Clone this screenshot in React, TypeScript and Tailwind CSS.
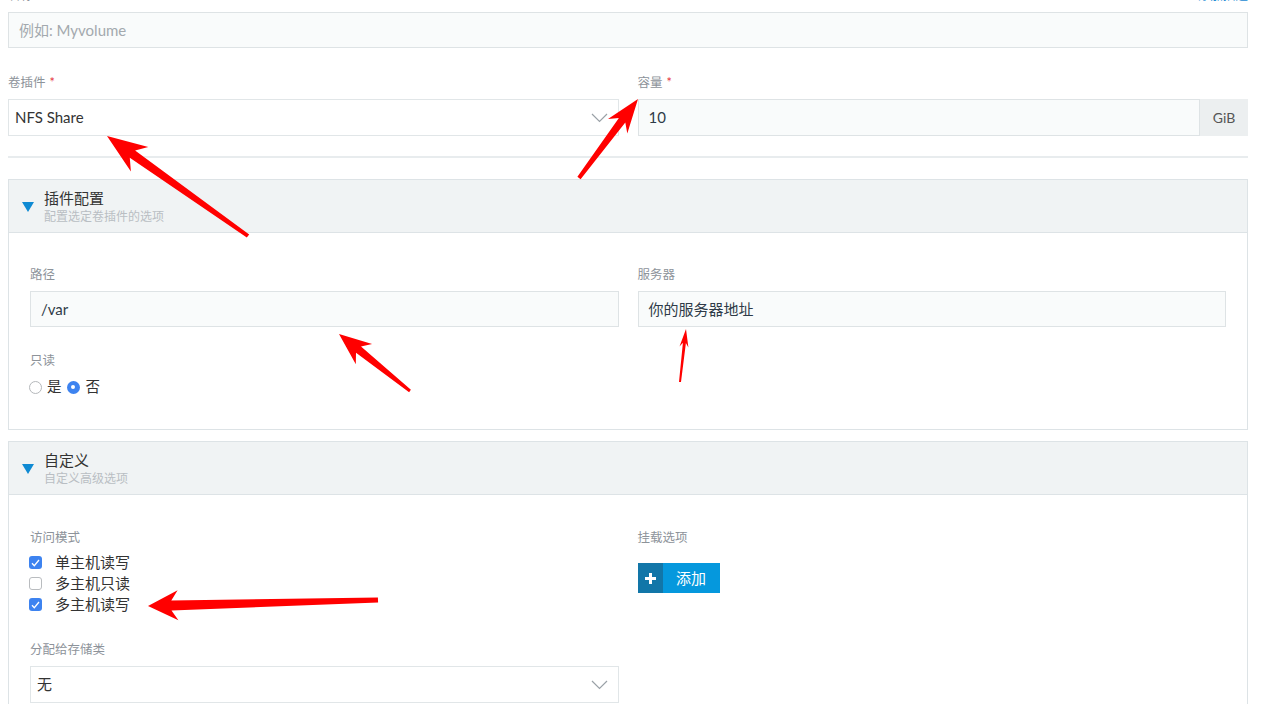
import React from 'react';

type Pt = [number, number];

// red annotation arrows: tapered shaft + swept-back head
const arrowPoints = (tail: Pt, tip: Pt, w0: number, w1: number, headLen: number, headW: number) => {
  const dx = tip[0] - tail[0];
  const dy = tip[1] - tail[1];
  const len = Math.hypot(dx, dy);
  const ux = dx / len;
  const uy = dy / len;
  const nx = -uy;
  const ny = ux;
  const bx = tip[0] - ux * headLen;
  const by = tip[1] - uy * headLen;
  const jx = bx + ux * headLen * 0.22;
  const jy = by + uy * headLen * 0.22;
  const p = (x: number, y: number, k: number) => `${(x + nx * k).toFixed(1)},${(y + ny * k).toFixed(1)}`;
  return [
    p(tail[0], tail[1], w0 / 2),
    p(jx, jy, w1 / 2),
    p(bx, by, headW / 2),
    `${tip[0]},${tip[1]}`,
    p(bx, by, -headW / 2),
    p(jx, jy, -w1 / 2),
    p(tail[0], tail[1], -w0 / 2),
  ].join(' ');
};

const arrows: { tail: Pt; tip: Pt; w0: number; w1: number; hl: number; hw: number }[] = [
  { tail: [248, 236], tip: [107, 136], w0: 4, w1: 9, hl: 40, hw: 30 },
  { tail: [579, 178], tip: [638, 99], w0: 4, w1: 8, hl: 34, hw: 24 },
  { tail: [410, 391], tip: [339, 334], w0: 3, w1: 8, hl: 32, hw: 26 },
  { tail: [680, 382], tip: [686, 329], w0: 2, w1: 3, hl: 18, hw: 9 },
  { tail: [378, 600], tip: [148, 606], w0: 5, w1: 10, hl: 30, hw: 30 },
];

const Label: React.FC<{ text: string; required?: boolean }> = ({ text, required }) => (
  <div className="h-[18px] leading-[18px] text-[12.5px] text-[#8d939a]">
    {text}
    {required && <span className="ml-1 text-[#e5333b]">*</span>}
  </div>
);

const TextBox: React.FC<{ value?: string; placeholder?: string }> = ({ value, placeholder }) => (
  <div className="mt-[7px] flex h-9 items-center border border-[#dee3e5] bg-[#f9fbfb] px-[10px] text-[15px] text-[#2f3b48]">
    {value ? value : <span className="text-[#a3a9ae]">{placeholder}</span>}
  </div>
);

const Chevron = () => (
  <svg width="17" height="10" viewBox="0 0 17 10" fill="none">
    <path d="M1 1l7.5 7.5L16 1" stroke="#9aa1a7" strokeWidth="1.2" />
  </svg>
);

const SelectBox: React.FC<{ value: string; className?: string }> = ({ value, className }) => (
  <div className={`flex h-[37px] items-center justify-between border border-[#e1e6e8] bg-white pl-[6px] pr-[10px] text-[15px] text-[#333] ${className || ''}`}>
    <span>{value}</span>
    <Chevron />
  </div>
);

const Section: React.FC<{ title: string; sub: string; children: React.ReactNode; className?: string }> = ({ title, sub, children, className }) => (
  <div className={`border border-[#dde3e6] ${className || ''}`}>
    <div className="flex h-[53px] items-center border-b border-[#dde3e6] bg-[#f0f3f4] pl-[13px]">
      <svg width="12" height="10" viewBox="0 0 12 10" className="mt-[2px]">
        <path d="M0 0h12L6 10z" fill="#0f8ad3" />
      </svg>
      <div className="ml-[10px]">
        <div className="text-[15px] leading-5 text-[#333]">{title}</div>
        <div className="mt-[1px] text-[12px] leading-4 text-[#b9bec3]">{sub}</div>
      </div>
    </div>
    <div className="bg-white px-[21px]">{children}</div>
  </div>
);

const Check: React.FC<{ on: boolean; text: string }> = ({ on, text }) => (
  <div className="flex h-[21px] items-center">
    {on ? (
      <span className="-ml-px flex h-[13px] w-[13px] items-center justify-center rounded-[3px] bg-[#3d83f0]">
        <svg width="9" height="8" viewBox="0 0 9 8" fill="none">
          <path d="M1 4.2l2.3 2.5L8 1" stroke="white" strokeWidth="1.3" />
        </svg>
      </span>
    ) : (
      <span className="-ml-px h-[13px] w-[13px] rounded-[3px] border border-[#b9bcbf] bg-white" />
    )}
    <span className="ml-[13px] text-[15px] text-[#333]">{text}</span>
  </div>
);

export default function App() {
  return (
    <div className="relative h-[704px] w-full overflow-hidden bg-white font-[Lato,'Noto_Sans_CJK_SC',sans-serif]">
      <div className="pl-2 pr-[27px]">
        <div className="-mt-[13px] flex h-[18px] items-center justify-between text-[12.5px] leading-[18px]">
          <span className="text-[#8d939a]">名称</span>
          <span className="text-[#1a8ad3]">添加描述</span>
        </div>
        <TextBox placeholder="例如: Myvolume" />

        <div className="mt-[26px] grid grid-cols-2 gap-x-[19px]">
          <div>
            <Label text="卷插件" required />
            <SelectBox value="NFS Share" className="mt-[7px]" />
          </div>
          <div>
            <Label text="容量" required />
            <div className="mt-[7px] flex h-[37px]">
              <div className="flex flex-1 items-center border border-[#dee3e5] bg-[#f9fbfb] px-[10px] text-[15px] text-[#2f3b48]">10</div>
              <div className="flex w-[48px] items-center justify-center bg-[#eceff0] text-[14px] text-[#555]">GiB</div>
            </div>
          </div>
        </div>

        <div className="mt-[20px] h-[2px] bg-[#e8ecee]" />

        <Section title="插件配置" sub="配置选定卷插件的选项" className="mt-[21px]">
          <div className="grid grid-cols-2 gap-x-[19px] pb-[33px] pt-[33px]">
            <div>
              <Label text="路径" />
              <TextBox value="/var" />
              <div className="mt-[25px]">
                <Label text="只读" />
              </div>
              <div className="mt-2 flex h-[18px] items-center text-[14.5px] text-[#333]">
                <span className="-ml-px h-[13px] w-[13px] rounded-full border border-[#b5b8bb] bg-white" />
                <span className="ml-[5px]">是</span>
                <span className="ml-[5px] flex h-[13px] w-[13px] items-center justify-center rounded-full bg-[#3d83f0]">
                  <span className="h-[4px] w-[4px] rounded-full bg-white" />
                </span>
                <span className="ml-[6px]">否</span>
              </div>
            </div>
            <div>
              <Label text="服务器" />
              <TextBox value="你的服务器地址" />
            </div>
          </div>
        </Section>

        <Section title="自定义" sub="自定义高级选项" className="mt-[11px]">
          <div className="grid grid-cols-2 gap-x-[19px] pb-8 pt-[34px]">
            <div>
              <Label text="访问模式" />
              <div className="mt-[5px]">
                <Check on text="单主机读写" />
                <Check on={false} text="多主机只读" />
                <Check on text="多主机读写" />
              </div>
              <div className="mt-[26px]">
                <Label text="分配给存储类" />
              </div>
              <SelectBox value="无" className="mt-[7px]" />
            </div>
            <div>
              <Label text="挂载选项" />
              <button className="mt-[16px] flex h-[30px] w-[82px] text-white">
                <span className="flex h-full w-[25px] items-center justify-center bg-[#1276a8]">
                  <svg width="11" height="11" viewBox="0 0 11 11">
                    <path d="M4 0h3v4h4v3H7v4H4V7H0V4h4z" fill="white" />
                  </svg>
                </span>
                <span className="flex h-full flex-1 items-center justify-center bg-[#0598dd] text-[15px]">添加</span>
              </button>
            </div>
          </div>
        </Section>
      </div>

      <svg className="pointer-events-none absolute left-0 top-0" width="1275" height="704">
        {arrows.map((a, i) => (
          <polygon key={i} points={arrowPoints(a.tail, a.tip, a.w0, a.w1, a.hl, a.hw)} fill="#ff0000" />
        ))}
      </svg>
    </div>
  );
}
